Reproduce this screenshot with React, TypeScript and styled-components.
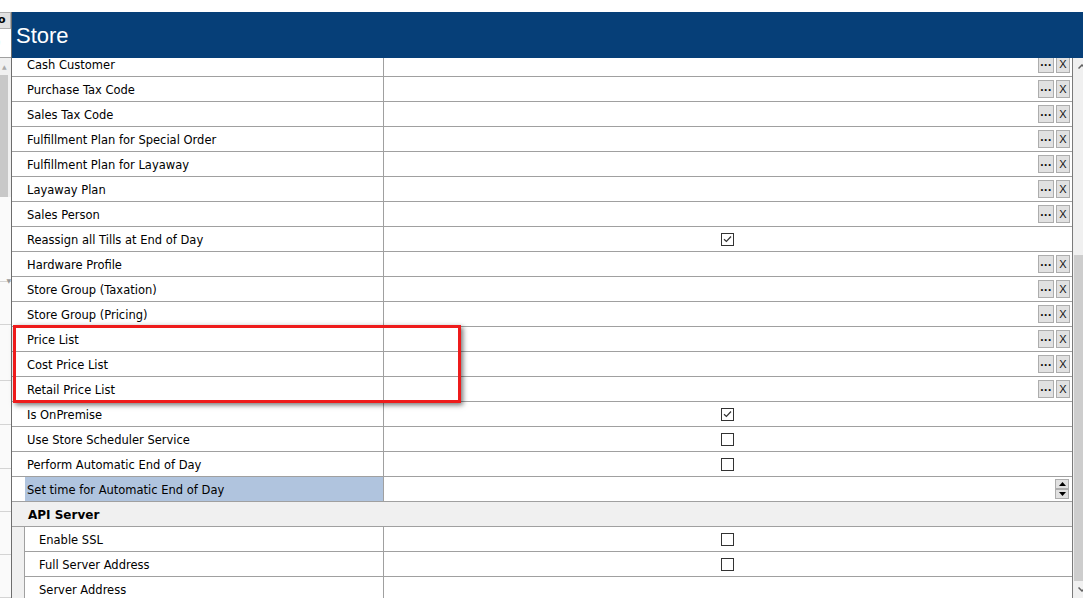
import React from 'react'
import styled, { createGlobalStyle } from 'styled-components'

const NAVY = '#063f78'
const GRID_LINE = '#a0a0a0'
const PANEL_GREY = '#f0f0f0'
const SELECTED = '#b0c4de'

const GlobalStyle = createGlobalStyle`
  html, body {
    margin: 0;
    padding: 0;
    background: #ffffff;
    overflow: hidden;
  }
  body {
    font-family: "DejaVu Sans", "Liberation Sans", sans-serif;
    font-size: 11.5px;
    color: #000;
  }
`

const Page = styled.div`
  position: relative;
  padding-top: 12px;
  width: 1100px;
  height: 586px;
  display: flex;
`

const LeftStrip = styled.div`
  width: 11px;
  flex: none;
  display: flex;
  flex-direction: column;
  border-right: 1px solid #6d6d6d;
  overflow: hidden;
`

const StripButton = styled.div`
  height: 15px;
  background: #e1e1e1;
  border: 1px solid #adadad;
  border-left: none;
  font-size: 11px;
  font-weight: bold;
  line-height: 14px;
  text-indent: -2px;
`

const StripField = styled.div`
  height: 28px;
  border-bottom: 1px solid ${GRID_LINE};
  font-size: 12px;
  line-height: 28px;
  text-indent: -4px;
  color: #666;
`

const StripArrow = styled.div`
  height: 17px;
  background: ${PANEL_GREY};
  font-size: 6px;
  color: #aaa;
  line-height: 17px;
  text-indent: 2px;
`

const StripScroll = styled.div`
  height: 122px;
  display: flex;
  background: ${PANEL_GREY};
`

const StripThumb = styled.div`
  width: 8px;
  background: #c8c8c8;
`

const StripList = styled.div`
  flex: 1;
  display: flex;
  flex-direction: column;
  background: #fafafa;
`

const StripLine = styled.div<{ h: number }>`
  height: ${p => p.h}px;
  flex: none;
  border-bottom: 1px solid #d4d4d4;
  font-size: 6px;
  color: #999;
  text-align: right;
  line-height: ${p => p.h * 2}px;
`

const Main = styled.div`
  flex: none;
  width: 1077px;
  display: flex;
  flex-direction: column;
`

const Header = styled.div`
  height: 46px;
  flex: none;
  background: ${NAVY};
  color: #fff;
  font-family: "Liberation Sans", Arial, sans-serif;
  font-size: 22px;
  line-height: 47px;
  padding-left: 4px;
`

const Body = styled.div`
  flex: 1;
  display: flex;
  overflow: hidden;
`

const Grid = styled.div`
  width: 1060px;
  flex: none;
  overflow: hidden;
`

const GridInner = styled.div<{ scroll: number }>`
  margin-top: -${p => p.scroll}px;
`

const Row = styled.div<{ sub?: boolean }>`
  display: flex;
  height: 25px;
  background: ${p => (p.sub ? PANEL_GREY : '#fff')};
`

const Gutter = styled.div`
  width: 12px;
  flex: none;
  border-right: 1px solid ${GRID_LINE};
  background: ${PANEL_GREY};
`

const RowMain = styled.div`
  flex: 1;
  display: flex;
  border-bottom: 1px solid ${GRID_LINE};
  background: #fff;
`

const Label = styled.div<{ w: number; indent: number }>`
  width: ${p => p.w}px;
  flex: none;
  box-sizing: border-box;
  border-right: 1px solid ${GRID_LINE};
  padding-left: ${p => p.indent}px;
  display: flex;
`

const LabelText = styled.div<{ selected?: boolean; pad: number }>`
  flex: 1;
  padding-left: ${p => p.pad}px;
  padding-top: 1px;
  line-height: 24px;
  white-space: nowrap;
  background: ${p => (p.selected ? SELECTED : 'transparent')};
`

const Value = styled.div<{ align: 'center' | 'right' }>`
  flex: 1;
  display: flex;
  align-items: center;
  justify-content: ${p => (p.align === 'center' ? 'center' : 'flex-end')};
  padding-right: 2px;
  gap: 2px;
`

const Category = styled.div`
  height: 24px;
  border-bottom: 1px solid ${GRID_LINE};
  background: ${PANEL_GREY};
  font-weight: bold;
  font-size: 12px;
  line-height: 26px;
  padding-left: 16px;
`

const MiniButton = styled.div<{ w: number }>`
  width: ${p => p.w}px;
  height: 18px;
  box-sizing: border-box;
  background: #e1e1e1;
  border: 1px solid #adadad;
  display: flex;
  align-items: center;
  justify-content: center;
  font-family: "Liberation Sans", Arial, sans-serif;
  font-size: 11px;
  color: #111;
`

const Dots = styled.span`
  font-weight: bold;
  letter-spacing: 0.5px;
  margin-top: -5px;
  font-size: 12px;
`

const Check = styled.div`
  width: 13px;
  height: 13px;
  box-sizing: border-box;
  border: 1px solid #333;
  background: #fff;
  display: flex;
  align-items: center;
  justify-content: center;
  margin-left: 1px;
`

const Spin = styled.div`
  display: flex;
  flex-direction: column;
  margin-right: 1px;
`

const SpinButton = styled.div`
  width: 14px;
  height: 10px;
  box-sizing: border-box;
  background: #e1e1e1;
  border: 1px solid #adadad;
  display: flex;
  align-items: center;
  justify-content: center;
`

const Scrollbar = styled.div`
  width: 17px;
  flex: none;
  border-left: 1px solid #7a7a7a;
  background: ${PANEL_GREY};
  display: flex;
  flex-direction: column;
`

const ScrollArrow = styled.div`
  height: 17px;
  flex: none;
  display: flex;
  align-items: center;
  justify-content: center;
`

const ScrollTrack = styled.div`
  flex: 1;
  display: flex;
  flex-direction: column;
`

const ScrollThumb = styled.div<{ offset: number }>`
  margin: ${p => p.offset}px 2px 0 1px;
  flex: 1;
  background: #cdcdcd;
`

const Highlight = styled.div`
  position: absolute;
  left: 13px;
  top: 325px;
  width: 448px;
  height: 78px;
  box-sizing: border-box;
  border: 3px solid #ee1b1b;
  box-shadow: 2px 2px 5px rgba(0, 0, 0, 0.55);
  pointer-events: none;
`

type Kind = 'lookup' | 'check' | 'checked' | 'spin' | 'empty'

interface Field {
  label: string
  kind: Kind
  selected?: boolean
}

const storeFields: Field[] = [
  { label: 'Cash Customer', kind: 'lookup' },
  { label: 'Purchase Tax Code', kind: 'lookup' },
  { label: 'Sales Tax Code', kind: 'lookup' },
  { label: 'Fulfillment Plan for Special Order', kind: 'lookup' },
  { label: 'Fulfillment Plan for Layaway', kind: 'lookup' },
  { label: 'Layaway Plan', kind: 'lookup' },
  { label: 'Sales Person', kind: 'lookup' },
  { label: 'Reassign all Tills at End of Day', kind: 'checked' },
  { label: 'Hardware Profile', kind: 'lookup' },
  { label: 'Store Group (Taxation)', kind: 'lookup' },
  { label: 'Store Group (Pricing)', kind: 'lookup' },
  { label: 'Price List', kind: 'lookup' },
  { label: 'Cost Price List', kind: 'lookup' },
  { label: 'Retail Price List', kind: 'lookup' },
  { label: 'Is OnPremise', kind: 'checked' },
  { label: 'Use Store Scheduler Service', kind: 'check' },
  { label: 'Perform Automatic End of Day', kind: 'check' },
  { label: 'Set time for Automatic End of Day', kind: 'spin', selected: true },
]

const apiFields: Field[] = [
  { label: 'Enable SSL', kind: 'check' },
  { label: 'Full Server Address', kind: 'check' },
  { label: 'Server Address', kind: 'empty' },
]

const CheckMark = () => (
  <svg width="9" height="8" viewBox="0 0 9 8">
    <path d="M1 4.2 L3.4 6.5 L8 1.5" fill="none" stroke="#333" strokeWidth="1.2" />
  </svg>
)

const Triangle = ({ up }: { up?: boolean }) => (
  <svg width="7" height="4" viewBox="0 0 7 4">
    <path d={up ? 'M0 4 L3.5 0 L7 4 Z' : 'M0 0 L7 0 L3.5 4 Z'} fill="#000" />
  </svg>
)

const FieldValue = ({ kind }: { kind: Kind }) => {
  switch (kind) {
    case 'lookup':
      return (
        <Value align="right">
          <MiniButton w={16}>
            <Dots>...</Dots>
          </MiniButton>
          <MiniButton w={14}>X</MiniButton>
        </Value>
      )
    case 'checked':
      return (
        <Value align="center">
          <Check>
            <CheckMark />
          </Check>
        </Value>
      )
    case 'check':
      return (
        <Value align="center">
          <Check />
        </Value>
      )
    case 'spin':
      return (
        <Value align="right">
          <Spin>
            <SpinButton>
              <Triangle up />
            </SpinButton>
            <SpinButton>
              <Triangle />
            </SpinButton>
          </Spin>
        </Value>
      )
    default:
      return <Value align="right" />
  }
}

const PropertyRow = ({ field, sub }: { field: Field; sub?: boolean }) => (
  <Row sub={sub}>
    {sub && <Gutter />}
    <RowMain>
      <Label w={sub ? 359 : 372} indent={sub ? 0 : 13}>
        <LabelText selected={field.selected} pad={sub ? 14 : 2}>
          {field.label}
        </LabelText>
      </Label>
      <FieldValue kind={field.kind} />
    </RowMain>
  </Row>
)

const stripLines = [42, 55, 43, 43, 42, 42, 42]

export default function App() {
  return (
    <>
      <GlobalStyle />
      <Page>
        <LeftStrip>
          <StripButton>o</StripButton>
          <StripField>)</StripField>
          <StripArrow>▲</StripArrow>
          <StripScroll>
            <StripThumb />
          </StripScroll>
          <StripList>
            <StripLine h={84}>▼</StripLine>
            {stripLines.map((h, i) => (
              <StripLine key={i} h={h} />
            ))}
          </StripList>
        </LeftStrip>
        <Main>
          <Header>Store</Header>
          <Body>
            <Grid>
              <GridInner scroll={6}>
                {storeFields.map(f => (
                  <PropertyRow key={f.label} field={f} />
                ))}
                <Category>API Server</Category>
                {apiFields.map(f => (
                  <PropertyRow key={f.label} field={f} sub />
                ))}
              </GridInner>
            </Grid>
            <Scrollbar>
              <ScrollArrow>
                <svg width="8" height="5" viewBox="0 0 8 5">
                  <path d="M0.5 4.5 L4 1 L7.5 4.5" fill="none" stroke="#606060" strokeWidth="1.5" />
                </svg>
              </ScrollArrow>
              <ScrollTrack>
                <ScrollThumb offset={180} />
              </ScrollTrack>
              <ScrollArrow>
                <svg width="8" height="5" viewBox="0 0 8 5">
                  <path d="M0.5 0.5 L4 4 L7.5 0.5" fill="none" stroke="#606060" strokeWidth="1.5" />
                </svg>
              </ScrollArrow>
            </Scrollbar>
          </Body>
        </Main>
        <Highlight />
      </Page>
    </>
  )
}
